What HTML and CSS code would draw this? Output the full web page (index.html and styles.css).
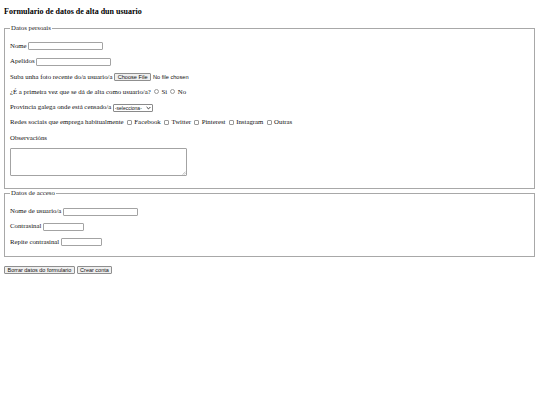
FILE: index.html
```html
<!DOCTYPE html>
<html lang="gl">
<head>
<meta charset="utf-8">
<title>Formulario de alta</title>
<link rel="stylesheet" href="styles.css">
</head>
<body>
<h3 class="title">Formulario de datos de alta dun usuario</h3>
<form class="form">
  <fieldset class="group group-personal">
    <legend class="group-legend">Datos persoais</legend>
    <div class="rows">
      <p class="row"><label>Nome <input type="text" class="field-text"></label></p>
      <p class="row"><label>Apelidos <input type="text" class="field-text"></label></p>
      <p class="row"><label>Suba unha foto recente do/a usuario/a <input type="file" class="field-file"></label></p>
      <p class="row">¿É a primeira vez que se dá de alta como usuario/a? <label><input type="radio" name="primeira" class="field-radio">Si</label> <label><input type="radio" name="primeira" class="field-radio">No</label></p>
      <p class="row"><label>Provincia galega onde está censado/a <span class="select-wrap"><select class="field-select"><option>-selecciona-</option><option>A Coruña</option><option>Lugo</option><option>Ourense</option><option>Pontevedra</option></select><svg class="select-arrow" width="5" height="4" viewBox="0 0 5 4"><path d="M0.6 1 L2.5 2.9 L4.4 1" fill="none" stroke="#222" stroke-width="0.9"/></svg></span></label></p>
      <p class="row">Redes sociais que emprega habitualmente <label><input type="checkbox" class="field-check">Facebook</label> <label><input type="checkbox" class="field-check">Twitter</label> <label><input type="checkbox" class="field-check">Pinterest</label> <label><input type="checkbox" class="field-check">Instagram</label> <label><input type="checkbox" class="field-check">Outras</label></p>
      <p class="row">Observacións</p>
      <div class="area-wrap"><textarea class="field-area" rows="4"></textarea><svg class="area-grip" width="4" height="4" viewBox="0 0 4 4"><path d="M3.6 0.6 L0.6 3.6 M3.6 2.2 L2.2 3.6" stroke="#999" stroke-width="0.6"/></svg></div>
    </div>
  </fieldset>
  <fieldset class="group group-access">
    <legend class="group-legend">Datos de acceso</legend>
    <div class="rows">
      <p class="row"><label>Nome de usuario/a <input type="text" class="field-text"></label></p>
      <p class="row"><label>Contrasinal <input type="password" class="field-pass"></label></p>
      <p class="row"><label>Repite contrasinal <input type="password" class="field-pass"></label></p>
    </div>
  </fieldset>
  <p class="actions"><input type="reset" value="Borrar datos do formulario" class="btn"> <input type="submit" value="Crear conta" class="btn"></p>
</form>
</body>
</html>
```
FILE: styles.css
```css
body {
  margin: 0;
  padding: 4px;
  font-family: "Liberation Serif", "Times New Roman", serif;
  font-size: 6.8px;
  line-height: 9px;
  color: #000;
  background: #fff;
}
.title {
  font-size: 8px;
  line-height: 10px;
  font-weight: bold;
  margin: 3px 0 7px;
  color: #000;
}
.form {
  margin: 0;
}
.group {
  margin: 0 1px 0 0;
  padding: 9px 5px 12px;
  border: 1px solid #a8a8a8;
  min-width: 0;
}
.group-access {
  padding-bottom: 10px;
}
.group-legend {
  padding: 0 1px;
  line-height: 8px;
  color: #222;
}
.rows {
  display: flex;
  flex-direction: column;
  gap: 6.3px;
}
.row {
  margin: 0;
  height: 9px;
  line-height: 9px;
  white-space: nowrap;
  color: #111;
}
.field-text,
.field-pass {
  box-sizing: border-box;
  width: 75px;
  height: 8px;
  margin: 0;
  padding: 0 1px;
  border: 1px solid #a3a3a3;
  border-radius: 1px;
  vertical-align: middle;
  font-size: 5.6px;
  background: #fff;
}
.field-pass {
  width: 41px;
}
.field-file {
  font-family: "Liberation Sans", Arial, sans-serif;
  font-size: 5.6px;
  line-height: 8px;
  height: 8px;
  margin: 0;
  padding: 0;
  vertical-align: middle;
  color: #111;
}
.field-file::file-selector-button {
  box-sizing: border-box;
  height: 8px;
  margin: 0 2px 0 0;
  padding: 0 2.5px;
  font-family: "Liberation Sans", Arial, sans-serif;
  font-size: 5.6px;
  line-height: 6px;
  color: #111;
  background: #efefef;
  border: 1px solid #8f8f8f;
  border-radius: 1px;
}
.field-radio,
.field-check {
  appearance: none;
  -webkit-appearance: none;
  box-sizing: border-box;
  width: 5px;
  height: 5px;
  margin: 0 2.5px 0 1.5px;
  border: 0.7px solid #9a9a9a;
  border-radius: 50%;
  vertical-align: -0.5px;
  background: #fff;
}
.field-check {
  border-radius: 1px;
}
.select-wrap {
  position: relative;
  display: inline-block;
  vertical-align: middle;
  height: 8px;
}
.field-select {
  appearance: none;
  -webkit-appearance: none;
  box-sizing: border-box;
  display: block;
  height: 8px;
  width: 40px;
  margin: 0;
  padding: 0 7px 0 1px;
  font-family: "Liberation Sans", Arial, sans-serif;
  font-size: 5px;
  line-height: 6px;
  color: #111;
  background: #fff;
  border: 1px solid #8a8a8a;
  border-radius: 1px;
}
.select-arrow {
  position: absolute;
  right: 1.5px;
  top: 2px;
  pointer-events: none;
}
.area-wrap {
  position: relative;
  width: 177px;
  height: 28px;
}
.field-area {
  box-sizing: border-box;
  display: block;
  width: 177px;
  height: 28px;
  margin: 0;
  padding: 1px;
  border: 1px solid #a3a3a3;
  border-radius: 1px;
  resize: none;
}
.area-grip {
  position: absolute;
  right: 1px;
  bottom: 1px;
}
.actions {
  margin: 9px 0 0;
  line-height: 8px;
}
.btn {
  box-sizing: border-box;
  height: 8px;
  margin: 0;
  padding: 0 2.5px;
  font-family: "Liberation Sans", Arial, sans-serif;
  font-size: 5.5px;
  line-height: 6px;
  color: #111;
  background: #efefef;
  border: 1px solid #8f8f8f;
  border-radius: 1px;
  vertical-align: top;
}
```
